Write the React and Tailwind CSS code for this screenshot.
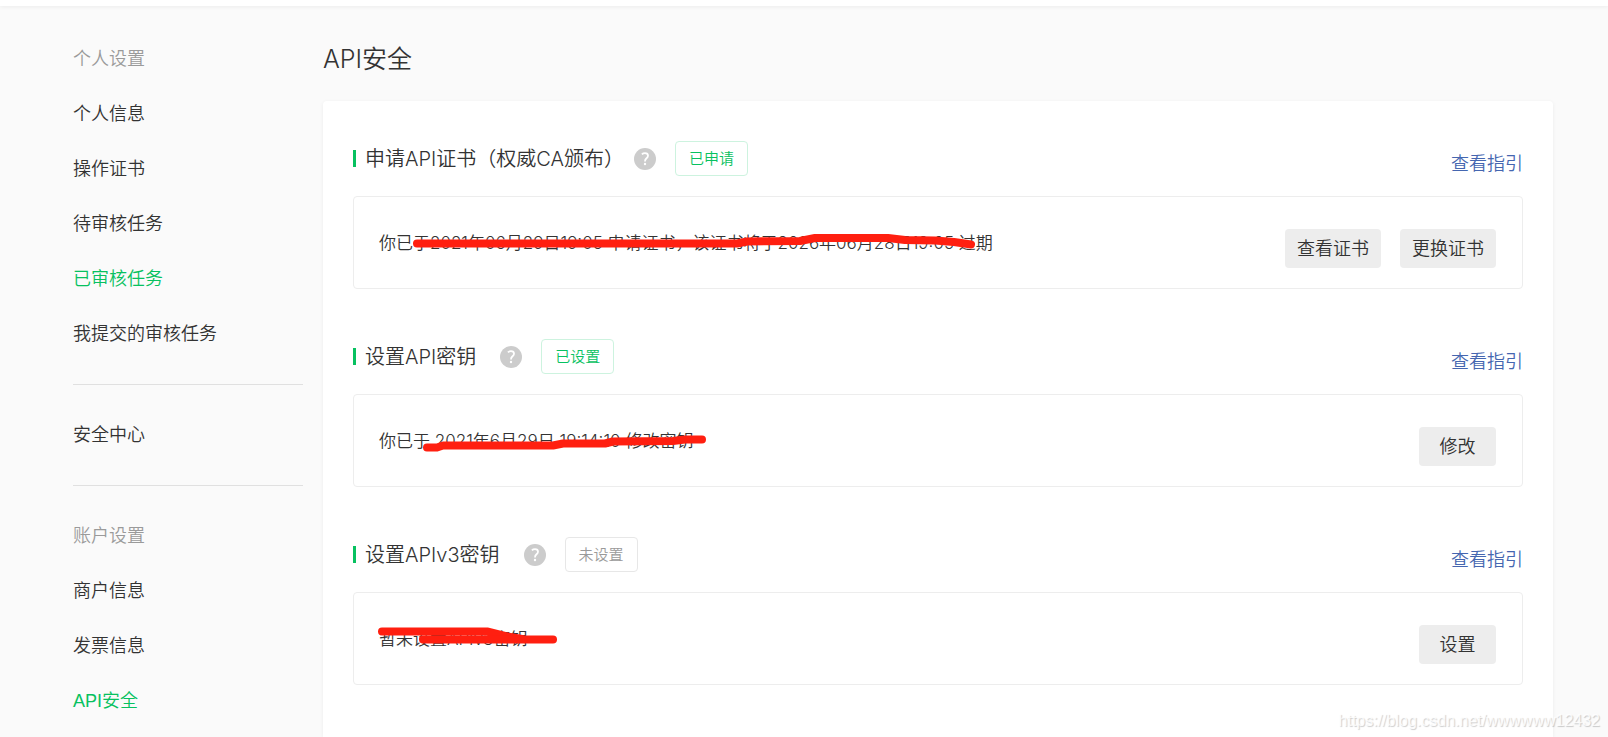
import React from 'react';
import clsx from 'clsx';

const menuGroups = [
    {
        title: '个人设置',
        items: ['个人信息', '操作证书', '待审核任务', '已审核任务', '我提交的审核任务'],
    },
    { items: ['安全中心'] },
    {
        title: '账户设置',
        items: ['商户信息', '发票信息', 'API安全'],
    },
];

const activeItems = ['已审核任务', 'API安全'];

const sections = [
    {
        title: '申请API证书（权威CA颁布）',
        status: '已申请',
        done: true,
        text: '你已于2021年06月29日19:05 申请证书，该证书将于2026年06月28日19:05 过期',
        marks: ['M38 14.5H358L368 12.5L421 12L436 9H509L526 11L556 11.5L575 13L592 15.5'],
        actions: ['查看证书', '更换证书'],
    },
    {
        title: '设置API密钥',
        status: '已设置',
        done: true,
        text: '你已于 2021年6月29日 19:14:10 修改密钥',
        marks: ['M48 20.5H58L64 18.5H174L184 16.5H226L234 14.5L294 14L306 12.5H323'],
        actions: ['修改'],
    },
    {
        title: '设置APIv3密钥',
        status: '未设置',
        done: false,
        text: '暂未设置APIv3密钥',
        marks: ['M3 6.5H108L126 11L143 14', 'M44 14.5H174'],
        actions: ['设置'],
    },
];

const HelpIcon = () => (
    <svg width="22" height="22" viewBox="0 0 22 22" fill="none">
        <circle cx="11" cy="11" r="11" fill="#ccc" />
        <path
            d="M7.9 6.4C8.7 5.6 9.7 5.2 11 5.2C12.9 5.2 14 6.2 14 7.7C14 9 13.2 9.7 12.3 10.5C11.4 11.3 11 11.9 11 13.4"
            stroke="#fff"
            strokeWidth="1.8"
        />
        <circle cx="11" cy="16" r="1.2" fill="#fff" />
    </svg>
);

const Sidebar = () => (
    <nav className="w-[230px] shrink-0 pt-[41px] text-[18px] leading-6">
        {menuGroups.map((group, idx) => (
            <div key={idx} className={clsx(idx > 0 && 'mt-[38px] border-t border-[#e0e0e0] pt-[38px]')}>
                {group.title && <h2 className="mb-[31px] text-[#9a9a9a]">{group.title}</h2>}
                <ul className="space-y-[31px]">
                    {group.items.map(item => (
                        <li key={item}>
                            <a
                                href="#"
                                className={clsx('block', activeItems.includes(item) ? 'text-[#07c160]' : 'text-[#333]')}
                            >
                                {item}
                            </a>
                        </li>
                    ))}
                </ul>
            </div>
        ))}
    </nav>
);

const Section = ({ section }) => (
    <section>
        <div className="mb-5 flex items-end justify-between">
            <div className="flex h-[35px] items-center">
                <span className="mr-[9px] h-[17px] w-[3px] bg-[#07c160]" />
                {/* a closing full-width bracket already brings its own space */}
                <h2
                    className={clsx(
                        "font-['Inter','Noto_Sans_CJK_SC',sans-serif] text-[20px] leading-7",
                        section.title.endsWith('）') ? 'mr-[10px]' : 'mr-6'
                    )}
                >
                    {section.title}
                </h2>
                <button type="button" aria-label="帮助" className="mr-[19px] cursor-pointer">
                    <HelpIcon />
                </button>
                <span
                    className={clsx(
                        'rounded border px-[13px] text-[15px] leading-[33px]',
                        section.done ? 'border-[#cdf3df] text-[#07c160]' : 'border-[#e7e7e7] text-[#9a9a9a]'
                    )}
                >
                    {section.status}
                </span>
            </div>
            <a href="#" className="text-[18px] leading-6 text-[#4566b0]">查看指引</a>
        </div>

        <div className="flex items-start justify-between rounded border border-[#ededed] pt-8 pr-[26px] pb-5 pl-[25px]">
            <p className="relative font-['Inter','Noto_Sans_CJK_SC',sans-serif] text-[17px] leading-7 whitespace-nowrap">
                {section.text}
                <svg className="absolute top-0 left-0 overflow-visible" width="600" height="28" fill="none">
                    {section.marks.map(d => (
                        <path
                            key={d}
                            d={d}
                            stroke="#ff1f10"
                            strokeWidth="8"
                            strokeLinecap="round"
                            strokeLinejoin="round"
                        />
                    ))}
                </svg>
            </p>
            <div className="flex gap-[19px]">
                {section.actions.map(action => (
                    <button
                        key={action}
                        type="button"
                        className="h-[39px] min-w-[77px] cursor-pointer rounded bg-[#ededed] px-3 text-[18px] leading-6"
                    >
                        {action}
                    </button>
                ))}
            </div>
        </div>
    </section>
);

const App = () => {
    return (
        <div className="relative flex min-h-screen flex-col bg-[#fafafa] font-['Liberation_Sans','Noto_Sans_CJK_SC',sans-serif] font-[350] text-[#333]">
            <header className="h-[6px] bg-white shadow-[0_1px_4px_rgba(0,0,0,0.06)]" />

            <div className="flex flex-1 gap-5 pr-[55px] pl-[73px]">
                <Sidebar />
                <main className="flex flex-1 flex-col">
                    <h1 className="pt-9 pb-6 font-['Inter','Noto_Sans_CJK_SC',sans-serif] text-[25px] leading-[35px]">
                        API安全
                    </h1>
                    <div className="flex-1 space-y-[50px] rounded-t bg-white px-[30px] pt-10 shadow-[0_1px_4px_rgba(0,0,0,0.06)]">
                        {sections.map(section => (
                            <Section key={section.title} section={section} />
                        ))}
                    </div>
                </main>
            </div>

            <div className="absolute right-2 bottom-1 text-[16px] leading-6 text-white/80 [text-shadow:1px_1px_1px_rgba(0,0,0,0.2)]">
                https://blog.csdn.net/wwwwww12432
            </div>
        </div>
    );
};

export default App;
